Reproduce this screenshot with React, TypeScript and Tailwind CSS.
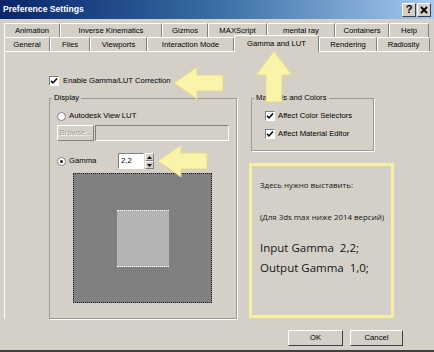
import React from 'react';

const row1: [string, string][] = [
  ['Animation', 'w-[56px]'],
  ['Inverse Kinematics', 'w-[102px]'],
  ['Gizmos', 'w-[46px]'],
  ['MAXScript', 'w-[59px]'],
  ['mental ray', 'w-[68px]'],
  ['Containers', 'w-[54px]'],
  ['Help', 'w-[40px]'],
];

const row2: [string, string][] = [
  ['General', 'w-[46px]'],
  ['Files', 'w-[40px]'],
  ['Viewports', 'w-[57px]'],
  ['Interaction Mode', 'w-[87px]'],
  ['Gamma and LUT', 'w-[85px]'],
  ['Rendering', 'w-[58px]'],
  ['Radiosity', 'w-[53px]'],
];

function Tab({ label, w, active }: { label: string; w: string; active?: boolean }) {
  if (active) {
    return (
      <div className={`${w} h-[17px] -mt-[2px] -mb-px relative z-10 flex items-center justify-center bg-[#d4d0c8] border-t border-l border-white border-r border-r-[#808080] rounded-t-[2px]`}>
        {label}
      </div>
    );
  }
  return (
    <div className={`${w} h-[14px] flex items-center justify-center border-t border-l border-white border-r border-r-[#808080] rounded-t-[2px]`}>
      {label}
    </div>
  );
}

function CheckBox() {
  return (
    <div className="w-[10px] h-[10px] shrink-0 bg-white border border-t-[#808080] border-l-[#808080] border-b-white border-r-white flex items-center justify-center">
      <svg width="8" height="8" viewBox="0 0 8 8">
        <path d="M1 3.8 L3 6 L7 1.6" fill="none" stroke="#000" strokeWidth="1.5" />
      </svg>
    </div>
  );
}

function Radio({ on }: { on?: boolean }) {
  return (
    <div className="w-[9px] h-[9px] shrink-0 rounded-full bg-white border border-[#808080] flex items-center justify-center">
      {on && <div className="w-[3px] h-[3px] rounded-full bg-black" />}
    </div>
  );
}

export default function App() {
  return (
    <div className="relative w-[434px] h-[352px] overflow-hidden bg-[#d4d0c8] border-b-2 border-[#404040] text-[7.7px] leading-none text-black font-['Liberation_Sans',Arial,sans-serif]">
      {/* title bar */}
      <div className="h-[19px] flex items-center justify-between pl-[3px] pr-[3px] bg-linear-to-r from-[#0a246a] via-[#3a6ea5] to-[#a6caf0]">
        <span className="text-white font-bold text-[8.6px]">Preference Settings</span>
        <div className="flex gap-[1px]">
          <div className="w-[14px] h-[14px] flex items-center justify-center bg-[#d4d0c8] border border-t-white border-l-white border-b-[#404040] border-r-[#404040] font-bold text-[11px]">?</div>
          <div className="w-[14px] h-[14px] flex items-center justify-center bg-[#d4d0c8] border border-t-white border-l-white border-b-[#404040] border-r-[#404040]">
            <svg width="8" height="8" viewBox="0 0 8 8">
              <path d="M1 1 L7 7 M7 1 L1 7" stroke="#000" strokeWidth="1.8" />
            </svg>
          </div>
        </div>
      </div>

      {/* tabs */}
      <div className="pt-[4px] pl-[4px]">
        <div className="flex">
          {row1.map(([l, w]) => (
            <Tab key={l} label={l} w={w} />
          ))}
        </div>
        <div className="flex items-end h-[14px]">
          {row2.map(([l, w]) => (
            <Tab key={l} label={l} w={w} active={l === 'Gamma and LUT'} />
          ))}
        </div>
      </div>

      {/* panel */}
      <div className="mx-[4px] border-t border-l border-white">
        <div className="pl-[44px] pt-[24px] flex items-center gap-[4px] h-[34px]">
          <CheckBox />
          <span>Enable Gamma/LUT Correction</span>
        </div>

        <div className="flex pl-[44px] mt-[8px] gap-[12px]">
          <fieldset className="w-[188px] h-[225px] border border-[#9c9a94] shadow-[1px_1px_0_#fff]">
            <legend className="ml-[2px] px-[2px] leading-[8px]">Display</legend>
            <div className="pl-[7px]">
              <div className="flex items-center gap-[3px] h-[10px] mt-[9px]">
                <Radio />
                <span>Autodesk View LUT</span>
              </div>
              <div className="flex mt-[4px] h-[16px]">
                <div className="w-[37px] h-[16px] flex items-center justify-center text-[#a09d96] border border-t-white border-l-white border-b-[#808080] border-r-[#808080] [text-shadow:1px_1px_0_#fff]">
                  Browse...
                </div>
                <div className="ml-[1px] w-[134px] h-[16px] bg-[#d4d0c8] border border-t-[#808080] border-l-[#808080] border-b-white border-r-white" />
              </div>
              <div className="flex items-center mt-[12px] h-[16px]">
                <Radio on />
                <span className="ml-[3px] w-[49px]">Gamma</span>
                <div className="w-[26px] h-[16px] bg-white border border-t-[#808080] border-l-[#808080] border-b-white border-r-white flex items-center pl-[2px]">
                  2,2
                </div>
                <div className="ml-[1px] w-[9px] h-[16px] flex flex-col">
                  <div className="h-[8px] flex items-center justify-center border border-t-white border-l-white border-b-[#808080] border-r-[#808080]">
                    <svg width="5" height="3" viewBox="0 0 5 3"><path d="M2.5 0 L5 3 L0 3 Z" fill="#000" /></svg>
                  </div>
                  <div className="h-[8px] flex items-center justify-center border border-t-white border-l-white border-b-[#808080] border-r-[#808080]">
                    <svg width="5" height="3" viewBox="0 0 5 3"><path d="M0 0 L5 0 L2.5 3 Z" fill="#000" /></svg>
                  </div>
                </div>
              </div>
              <div className="mt-[4px] ml-[16px] w-[139px] h-[130px] bg-[#808080] border border-dotted border-[#1a1a1a] flex items-center justify-center">
                <div className="w-[52px] h-[57px] bg-[#b4b4b4] border-y border-dotted border-white" />
              </div>
            </div>
          </fieldset>

          <div className="flex flex-col">
            <fieldset className="ml-[2px] w-[123px] h-[57px] border border-[#9c9a94] shadow-[1px_1px_0_#fff]">
              <legend className="ml-[2px] px-[2px] leading-[8px]">Materials and Colors</legend>
              <div className="pl-[13px]">
                <div className="flex items-center gap-[3px] h-[10px] mt-[9px]">
                  <CheckBox />
                  <span>Affect Color Selectors</span>
                </div>
                <div className="flex items-center gap-[3px] h-[10px] mt-[8px]">
                  <CheckBox />
                  <span>Affect Material Editor</span>
                </div>
              </div>
            </fieldset>

            <div className="mt-[12px] w-[145px] h-[155px] border-[3px] border-[#f7efa2] pl-[8px] pt-[14px] flex flex-col text-[#161616] font-['Open_Sans','Noto_Sans',sans-serif]">
              <div className="text-[7.9px] leading-[10px]">Здесь нужно выставить:</div>
              <div className="text-[7.9px] leading-[10px] mt-[22px]">(Для 3ds max ниже 2014 версий)</div>
              <div className="text-[11.5px] leading-[16px] mt-[18px] whitespace-pre">Input Gamma  2,2;</div>
              <div className="text-[11.5px] leading-[16px] mt-[4px] whitespace-pre">Output Gamma  1,0;</div>
            </div>
          </div>
        </div>
      </div>

      {/* buttons */}
      <div className="flex justify-end gap-[7px] pr-[31px] mt-[11px]">
        <button className="w-[55px] h-[16px] flex items-center justify-center bg-[#d4d0c8] border border-t-white border-l-white border-b-[#404040] border-r-[#404040]">
          OK
        </button>
        <button className="w-[53px] h-[16px] flex items-center justify-center bg-[#d4d0c8] border border-t-white border-l-white border-b-[#404040] border-r-[#404040]">
          Cancel
        </button>
      </div>

      {/* annotation arrows */}
      <svg className="absolute inset-0 pointer-events-none" width="434" height="352">
        <g fill="#faf3aa" stroke="#e4d88c" strokeWidth="1" strokeLinejoin="round">
          <polygon points="174,83 197,67 197,75 223,75 223,91 197,91 197,99" />
          <polygon points="158,161 181,145 181,153 207,153 207,169 181,169 181,177" />
          <polygon points="274,51 292,75 282,75 282,102 266,102 266,75 256,75" />
        </g>
      </svg>
    </div>
  );
}
